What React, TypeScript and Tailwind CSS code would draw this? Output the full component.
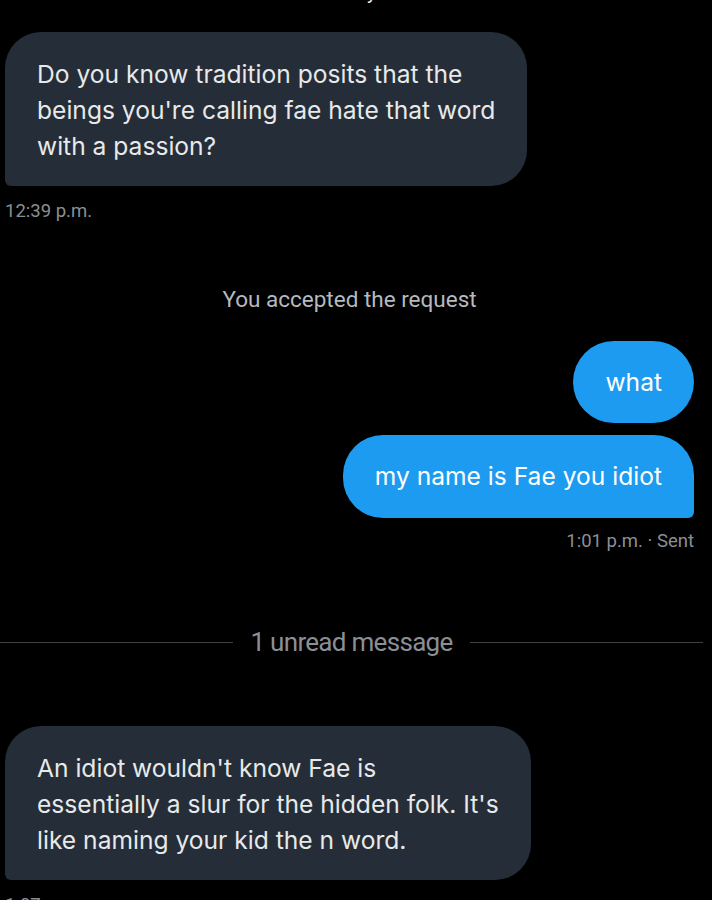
export default function App() {
  return (
    <div className="min-h-[900px] h-[900px] overflow-hidden bg-black pl-[5px] pr-[18px] font-['Inter','Noto_Sans',sans-serif]">
      {/* date header, mostly scrolled out of view */}
      <div className="-mt-[19px] h-[22px] text-center text-[20px] leading-[22px] text-[#e7e9ea] font-['Roboto',sans-serif]">
        Today
      </div>

      {/* incoming */}
      <div className="mt-[29px] w-fit rounded-[36px] rounded-bl-[6px] bg-[#252e38] px-[32px] pt-[24px] pb-[22px] text-[24.6px] leading-[36px] text-[#e7e9ea]">
        <div className="whitespace-nowrap">Do you know tradition posits that the</div>
        <div className="whitespace-nowrap">beings you're calling fae hate that word</div>
        <div className="whitespace-nowrap">with a passion?</div>
      </div>
      <div className="mt-[13px] text-[18.5px] leading-[24px] text-[#8b8f94] font-['Roboto',sans-serif]">
        12:39 p.m.
      </div>

      <div className="mt-[62px] text-center text-[22.5px] leading-[28px] text-[#b6b9bd] font-['Roboto',sans-serif]">
        You accepted the request
      </div>

      {/* outgoing */}
      <div className="mt-[28px] flex flex-col items-end gap-[12px]">
        <div className="flex h-[82px] items-center rounded-full bg-[#1d9bf0] px-[32px] text-[24.6px] text-white">
          what
        </div>
        <div className="flex h-[83px] items-center rounded-[40px] rounded-br-[6px] bg-[#1d9bf0] px-[32px] text-[24.6px] text-white">
          my name is Fae you idiot
        </div>
      </div>
      <div className="mt-[11px] text-right text-[18.5px] leading-[24px] text-[#8b8f94] font-['Roboto',sans-serif]">
        1:01 p.m. · Sent
      </div>

      {/* unread divider */}
      <div className="mt-[74px] -ml-[5px] mr-[-9px] flex items-center gap-[17px]">
        <div className="h-px flex-1 bg-[#3e4246]" />
        <div className="text-[26px] leading-[30px] tracking-[-0.7px] text-[#8b8f94] font-['Liberation_Sans_Narrow','Roboto',sans-serif]">
          1 unread message
        </div>
        <div className="h-px flex-1 bg-[#3e4246]" />
      </div>

      {/* incoming */}
      <div className="mt-[69px] w-fit rounded-[36px] rounded-bl-[6px] bg-[#252e38] px-[32px] pt-[24px] pb-[22px] text-[24.6px] leading-[36px] text-[#e7e9ea]">
        <div className="whitespace-nowrap">An idiot wouldn't know Fae is</div>
        <div className="whitespace-nowrap">essentially a slur for the hidden folk. It's</div>
        <div className="whitespace-nowrap">like naming your kid the n word.</div>
      </div>
      <div className="mt-[13px] text-[18.5px] leading-[24px] text-[#8b8f94] font-['Roboto',sans-serif]">
        1:07 p.m.
      </div>
    </div>
  );
}
